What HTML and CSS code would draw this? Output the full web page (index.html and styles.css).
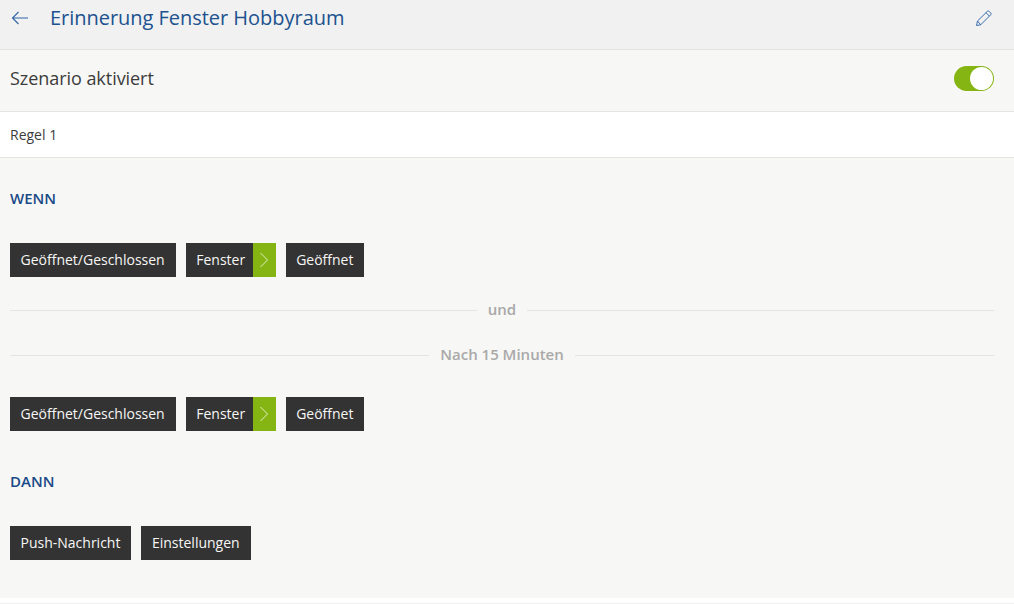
FILE: index.html
```html
<!DOCTYPE html>
<html lang="de">
<head>
<meta charset="utf-8">
<title>Erinnerung Fenster Hobbyraum</title>
<link rel="stylesheet" href="styles.css">
</head>
<body>
<header class="topbar">
  <svg class="back" width="18" height="14" viewBox="0 0 18 14"><path d="M17 7H1.500M7.500 1L1.500 7l6 6" fill="none" stroke="#2f66a8" stroke-width="1.100"/></svg>
  <h1 class="title">Erinnerung Fenster Hobbyraum</h1>
  <svg class="edit" width="18" height="18" viewBox="0 0 18 18"><path d="M2.500 12L12.500 2.200a1 1 0 0 1 1.400 0l2 2a1 1 0 0 1 0 1.400L5.700 15.800l-4.200.7zM11 3.700l3.400 3.400M2.500 12l3.200 3.800" fill="none" stroke="#3a6cab" stroke-width="1"/></svg>
</header>
<section class="status">
  <span class="status-label">Szenario aktiviert</span>
  <span class="toggle"><span class="knob"></span></span>
</section>
<section class="rule-name">Regel 1</section>
<main class="content">
  <h2 class="heading heading-when">WENN</h2>
  <div class="chips">
    <span class="chip">Geöffnet/Geschlossen</span>
    <span class="chip chip-more">Fenster<span class="chev"><svg width="10" height="16" viewBox="0 0 10 16"><path d="M1.500 1L8.500 8l-7 7" fill="none" stroke="#e4efc4" stroke-width="1"/></svg></span></span>
    <span class="chip">Geöffnet</span>
  </div>
  <div class="divider divider-and">und</div>
  <div class="divider divider-time">Nach 15 Minuten</div>
  <div class="chips chips-second">
    <span class="chip">Geöffnet/Geschlossen</span>
    <span class="chip chip-more">Fenster<span class="chev"><svg width="10" height="16" viewBox="0 0 10 16"><path d="M1.500 1L8.500 8l-7 7" fill="none" stroke="#e4efc4" stroke-width="1"/></svg></span></span>
    <span class="chip">Geöffnet</span>
  </div>
  <h2 class="heading heading-then">DANN</h2>
  <div class="chips chips-then">
    <span class="chip">Push-Nachricht</span>
    <span class="chip">Einstellungen</span>
  </div>
</main>
<div class="foot"></div>
</body>
</html>
```
FILE: styles.css
```css
* { box-sizing: border-box; }
html, body { margin: 0; padding: 0; }
body {
  font-family: "Open Sans", sans-serif;
  background: #fff;
  height: 604px;
  overflow: hidden;
  color: #3a3a3a;
}
.topbar {
  height: 50px;
  background: #f1f1f1;
  border-bottom: 1px solid #e4e4e2;
  display: flex;
  align-items: center;
  padding: 0 21px 14px 11px;
}
.back { flex: none; }
.title {
  margin: 0 0 0 21px;
  flex: 1;
  font-size: 20px;
  font-weight: 400;
  line-height: 28px;
  letter-spacing: -0.03px;
  color: #20528f;
}
.edit { flex: none; }
.status {
  height: 62px;
  background: #f7f7f5;
  border-bottom: 1px solid #e4e4e2;
  display: flex;
  align-items: center;
  justify-content: space-between;
  padding: 0 20px 4px 10px;
}
.status-label { font-size: 18px; line-height: 24px; margin-top: -2px; letter-spacing: -0.05px; color: #3c3c3c; }
.toggle {
  width: 40px;
  height: 25px;
  border-radius: 13px;
  background: #84b512;
  display: block;
  padding: 1px 1px 1px 16px;
}
.knob { display: block; width: 23px; height: 23px; border-radius: 50%; background: #fff; }
.rule-name {
  height: 46px;
  background: #fff;
  border-bottom: 1px solid #e4e4e2;
  padding: 0 10px 1px;
  display: flex;
  align-items: center;
  font-size: 14px;
  color: #3c3c3c;
}
.content {
  height: 440px;
  background: #f7f7f5;
  padding: 0 20px 0 10px;
}
.heading {
  margin: 0;
  font-size: 15px;
  font-weight: 600;
  line-height: 20px;
  color: #1a4a87;
}
.heading-when { padding-top: 30px; }
.heading-then { margin-top: 40px; }
.chips { display: flex; gap: 10px; margin-top: 35px; }
.chips-second { margin-top: 33px; }
.chips-then { margin-top: 35px; }
.chip {
  height: 34px;
  background: #333;
  color: #f7f7f5;
  font-size: 14px;
  line-height: 34px;
  padding: 0 11px 0 10.500px;
  display: flex;
}
.chip-more { padding-right: 0; }
.chev {
  width: 23px;
  margin-left: 7.500px;
  background: #84b512;
  display: flex;
  align-items: center;
  justify-content: center;
}
.divider {
  display: flex;
  align-items: center;
  gap: 11px;
  font-size: 15px;
  font-weight: 600;
  line-height: 20px;
  color: #a9a9a9;
}
.divider::before, .divider::after {
  content: "";
  flex: 1;
  height: 1px;
  margin-top: 2px;
  background: #e4e4e2;
}
.divider-and { margin-top: 22px; }
.divider-time { margin-top: 25px; }
.foot { height: 6px; background: #fff; border-bottom: 1px solid #f1f1f1; }
```
